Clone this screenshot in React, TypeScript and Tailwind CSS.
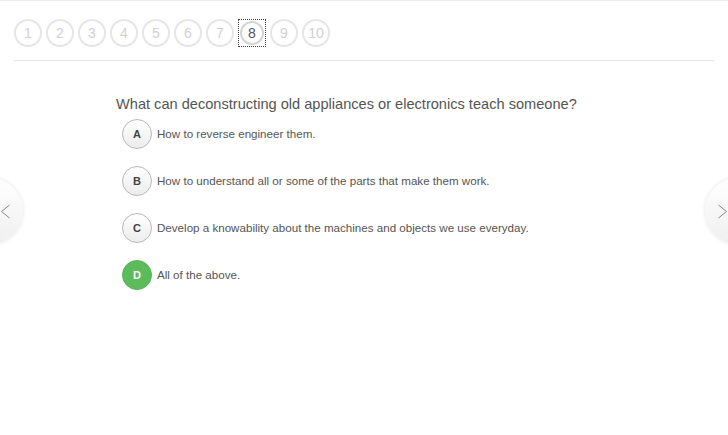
import React from "react";

const options = [
  { letter: "A", text: "How to reverse engineer them." },
  { letter: "B", text: "How to understand all or some of the parts that make them work." },
  { letter: "C", text: "Develop a knowability about the machines and objects we use everyday." },
  { letter: "D", text: "All of the above.", correct: true },
];

export default function App() {
  return (
    <div
      className="relative w-[728px] h-[435px] bg-white overflow-hidden border-t border-[#ececec]"
      style={{ fontFamily: '"Liberation Sans", Arial, Helvetica, sans-serif' }}
    >
      <div className="flex gap-[4px] pl-[14px] pt-[18px]">
        {Array.from({ length: 10 }, (_, i) => i + 1).map((n) =>
          n === 8 ? (
            <div
              key={n}
              className="w-[28px] h-[28px] flex items-center justify-center outline-1 outline-dotted outline-[#444] outline-offset-[-1px]"
            >
              <div className="w-[24px] h-[24px] rounded-full border-2 border-[#d4d4d4] flex items-center justify-center text-[14px] text-[#555]">
                {n}
              </div>
            </div>
          ) : (
            <div
              key={n}
              className="w-[28px] h-[28px] rounded-full border-2 border-[#e6e6e6] flex items-center justify-center text-[14px] text-[#d0d0d0]"
            >
              {n}
            </div>
          )
        )}
      </div>
      <div className="mx-[14px] mt-[13px] h-px bg-[#e3e3e3]" />

      <div className="pl-[116px] pt-[33px]">
        <div className="text-[14.6px] leading-[20px] text-[#555]">
          What can deconstructing old appliances or electronics teach someone?
        </div>
        <div className="flex flex-col gap-[17px] mt-[5px] pl-[6px]">
          {options.map((o) => (
            <div key={o.letter} className="flex items-center gap-[5px]">
              {o.correct ? (
                <div className="w-[30px] h-[30px] rounded-full bg-[#5cbc5c] border border-[#56b356] flex items-center justify-center text-[11px] font-bold text-white">
                  {o.letter}
                </div>
              ) : (
                <div className="w-[30px] h-[30px] rounded-full bg-gradient-to-b from-white to-[#ececec] border border-[#b8b8b8] flex items-center justify-center text-[11px] font-bold text-[#444]">
                  {o.letter}
                </div>
              )}
              <div className="text-[11.6px] text-[#555]">{o.text}</div>
            </div>
          ))}
        </div>
      </div>

      <div className="absolute left-[-43px] top-[177px] w-[66px] h-[66px] rounded-full bg-gradient-to-b from-white to-[#efefef] shadow-[0_0_4px_rgba(0,0,0,0.12)] flex items-center justify-end pr-[12px]">
        <svg width="11" height="15" viewBox="0 0 11 15">
          <polyline points="9.5,1 1.5,7.5 9.5,14" fill="none" stroke="#888" strokeWidth="1" />
        </svg>
      </div>
      <div className="absolute left-[705px] top-[177px] w-[66px] h-[66px] rounded-full bg-gradient-to-b from-white to-[#efefef] shadow-[0_0_4px_rgba(0,0,0,0.12)] flex items-center justify-start pl-[12px]">
        <svg width="11" height="15" viewBox="0 0 11 15">
          <polyline points="1.5,1 9.5,7.5 1.5,14" fill="none" stroke="#888" strokeWidth="1" />
        </svg>
      </div>
    </div>
  );
}
